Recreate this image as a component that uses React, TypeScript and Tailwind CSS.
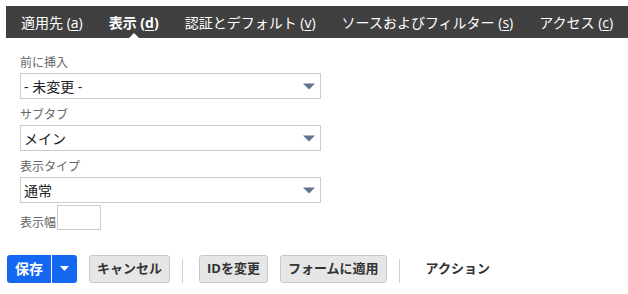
const tabs = [
  { label: '適用先', key: 'a' },
  { label: '表示', key: 'd', active: true },
  { label: '認証とデフォルト', key: 'v' },
  { label: 'ソースおよびフィルター', key: 's' },
  { label: 'アクセス', key: 'c' },
]

function Select({ value }: { value: string }) {
  return (
    <div className="flex h-[26px] w-[301px] items-center justify-between border border-[#cccccc] bg-white pl-[3px] pr-[5px]">
      <span className="text-[14px] text-[#222]">{value}</span>
      <svg width="12" height="7" viewBox="0 0 12 7">
        <path d="M0 0.5 L12 0.5 L6 6.5 Z" fill="#5d7390" />
      </svg>
    </div>
  )
}

function Field({ label, value }: { label: string; value: string }) {
  return (
    <div className="flex flex-col">
      <span className="mb-[3px] text-[12px] leading-[15px] text-[#666]">{label}</span>
      <Select value={value} />
    </div>
  )
}

function GrayButton({ children }: { children: React.ReactNode }) {
  return (
    <button className="h-[28px] whitespace-nowrap rounded-[3px] border border-[#c8c8c8] bg-[#e6e6e6] px-[7px] text-[13px] font-bold text-[#333]">
      {children}
    </button>
  )
}

export default function App() {
  return (
    <div className="h-[294px] w-[628px] bg-white" style={{ fontFamily: '"Open Sans", "Noto Sans CJK JP", sans-serif' }}>
      <div className="pl-[6px] pt-[6px]">
        <div className="flex h-[32px] items-center overflow-hidden whitespace-nowrap bg-[#404040] pl-[15px] text-[14px] text-white">
          {tabs.map((t) => (
            <div key={t.key} className={`relative mr-[26px] flex h-full shrink-0 items-center ${t.active ? 'font-bold' : ''}`}>
              <span>
                {t.label} (<span className="underline underline-offset-2">{t.key}</span>)
              </span>
              {t.active && (
                <span className="absolute bottom-0 left-1/2 h-0 w-0 -translate-x-1/2 border-x-[5px] border-b-[5px] border-x-transparent border-b-white" />
              )}
            </div>
          ))}
        </div>
      </div>
      <div className="flex flex-col gap-[8px] pl-[20px] pt-[17px]">
        <Field label="前に挿入" value="- 未変更 -" />
        <Field label="サブタブ" value="メイン" />
        <Field label="表示タイプ" value="通常" />
        <div className="-mt-[6px] flex items-end">
          <span className="text-[12px] leading-[15px] text-[#666]">表示幅</span>
          <div className="ml-px h-[25px] w-[44px] border border-[#cccccc]" />
        </div>
      </div>
      <div className="mt-[24px] flex items-center pl-[7px]">
        <div className="flex h-[28px] items-stretch overflow-hidden rounded-[3px] bg-[#1467f0] text-white">
          <span className="flex items-center px-[8px] text-[14px] font-bold">保存</span>
          <span className="w-px bg-white" />
          <span className="flex w-[25px] items-center justify-center">
            <svg width="9" height="5" viewBox="0 0 9 5">
              <path d="M0 0 L9 0 L4.5 5 Z" fill="white" />
            </svg>
          </span>
        </div>
        <div className="ml-[12px]">
          <GrayButton>キャンセル</GrayButton>
        </div>
        <span className="ml-[12px] mr-[16px] mt-[5px] h-[24px] w-px bg-[#d0d0d0]" />
        <GrayButton>IDを変更</GrayButton>
        <div className="ml-[12px]">
          <GrayButton>フォームに適用</GrayButton>
        </div>
        <span className="ml-[12px] mr-[26px] mt-[5px] h-[24px] w-px bg-[#d0d0d0]" />
        <span className="text-[13px] font-bold text-[#333]">アクション</span>
      </div>
    </div>
  )
}
